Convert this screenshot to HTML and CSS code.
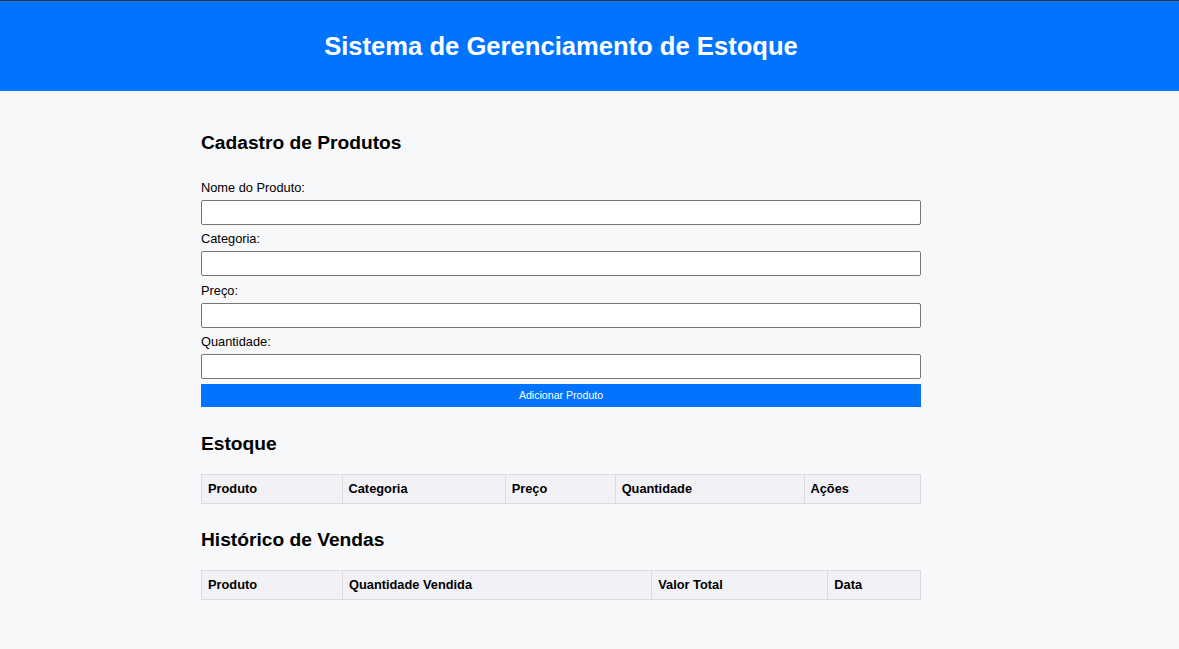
FILE: index.html
```html
<!DOCTYPE html>
<html lang="pt-BR">
<head>
<meta charset="utf-8">
<title>Sistema de Gerenciamento de Estoque</title>
<link rel="stylesheet" href="styles.css">
</head>
<body>
<header class="topbar">
  <div class="wrap">
    <h1 class="title">Sistema de Gerenciamento de Estoque</h1>
  </div>
</header>
<main class="wrap content">
  <section class="section">
    <h2 class="heading">Cadastro de Produtos</h2>
    <form class="form">
      <label class="label" for="nome">Nome do Produto:</label>
      <input class="field" id="nome" type="text">
      <label class="label" for="categoria">Categoria:</label>
      <input class="field" id="categoria" type="text">
      <label class="label" for="preco">Preço:</label>
      <input class="field" id="preco" type="text">
      <label class="label" for="quantidade">Quantidade:</label>
      <input class="field" id="quantidade" type="text">
      <button class="btn" type="button">Adicionar Produto</button>
    </form>
  </section>
  <section class="section">
    <h2 class="heading">Estoque</h2>
    <table class="table">
      <thead>
        <tr><th>Produto</th><th>Categoria</th><th>Preço</th><th>Quantidade</th><th>Ações</th></tr>
      </thead>
      <tbody></tbody>
    </table>
  </section>
  <section class="section">
    <h2 class="heading">Histórico de Vendas</h2>
    <table class="table">
      <thead>
        <tr><th>Produto</th><th>Quantidade Vendida</th><th>Valor Total</th><th>Data</th></tr>
      </thead>
      <tbody></tbody>
    </table>
  </section>
</main>
</body>
</html>
```
FILE: styles.css
```css
html, body {
  margin: 0;
  padding: 0;
}
body {
  background: #f7f8fa;
  font-family: "Liberation Sans", Arial, sans-serif;
  color: #000;
  border-top: 1px solid #333;
}
.wrap {
  box-sizing: border-box;
  width: 921px;
  padding-left: 201px;
}
.topbar {
  background: #0074ff;
  height: 90px;
  display: flex;
  align-items: center;
}
.title {
  margin: 0;
  color: #fff;
  font-size: 25.6px;
  font-weight: bold;
  text-align: center;
}
.content {
  padding-top: 41px;
}
.heading {
  margin: 0;
  font-size: 19.2px;
  line-height: 22px;
  font-weight: bold;
}
.section {
  margin-bottom: 25px;
}
.form {
  display: flex;
  flex-direction: column;
  margin-top: 26px;
  padding-bottom: 1px;
}
.label {
  font-size: 12.8px;
  line-height: 15px;
  margin-bottom: 5px;
}
.field {
  box-sizing: border-box;
  height: 25px;
  margin: 0 0 6.33px;
  border: 1px solid #767676;
  border-radius: 2px;
  background: #fff;
  font-family: inherit;
  font-size: 13px;
  padding: 4px 6px;
}
.btn {
  margin-top: -1.33px;
  height: 23px;
  border: 0;
  background: #0074ff;
  color: #fff;
  font-family: inherit;
  font-size: 10.6px;
  padding: 0;
}
.table {
  width: 100%;
  margin-top: 19px;
  border-collapse: collapse;
}
.table th {
  background: #f2f2f6;
  border: 1px solid #dcdcdf;
  padding: 6px;
  text-align: left;
  font-size: 12.8px;
  line-height: 16px;
  font-weight: bold;
}
```
